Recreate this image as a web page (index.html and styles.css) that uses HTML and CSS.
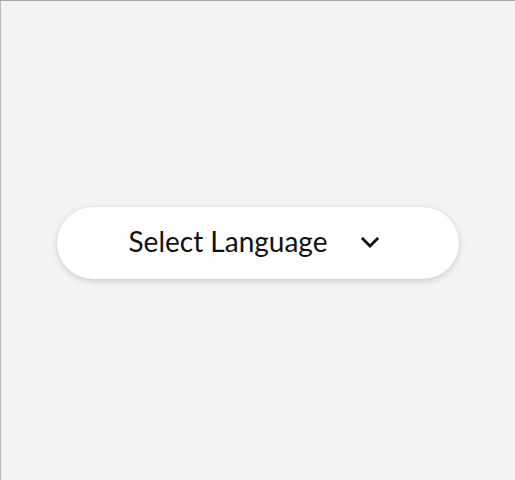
FILE: index.html
```html
<!DOCTYPE html>
<html lang="en">
<head>
<meta charset="utf-8">
<title>Select Language</title>
<link rel="stylesheet" href="styles.css">
</head>
<body>
<main class="stage">
  <button class="lang-select" type="button">
    <span class="lang-label">Select Language</span>
    <svg class="chevron" width="18" height="11" viewBox="0 0 18 11" aria-hidden="true">
      <path d="M1.8 1.8 L9 9 L16.2 1.8" fill="none" stroke="#111" stroke-width="2.7" stroke-linecap="square" stroke-linejoin="miter"/>
    </svg>
  </button>
</main>
</body>
</html>
```
FILE: styles.css
```css
html, body {
  margin: 0;
  padding: 0;
  height: 100%;
}
body {
  background: #f4f4f4;
  font-family: Lato, "Open Sans", sans-serif;
  box-sizing: border-box;
  border-top: 1px solid #a8a8a8;
  border-left: 1px solid #b8b8b8;
}
.stage {
  box-sizing: border-box;
  height: 100%;
  display: flex;
  justify-content: center;
  padding-top: 206px;
  padding-right: 1px;
}
.lang-select {
  box-sizing: border-box;
  width: 402px;
  height: 72px;
  border: none;
  border-radius: 36px;
  background: #ffffff;
  box-shadow: 0 2px 7px rgba(0, 0, 0, 0.16), 0 0 2px rgba(0, 0, 0, 0.06);
  display: flex;
  align-items: center;
  justify-content: center;
  gap: 34px;
  padding: 0 7px 0 0;
  font-family: inherit;
  cursor: pointer;
}
.lang-label {
  font-size: 28px;
  color: #111111;
  line-height: 1;
  margin-top: -4px;
}
.chevron {
  display: block;
  margin-top: -2px;
}
```
